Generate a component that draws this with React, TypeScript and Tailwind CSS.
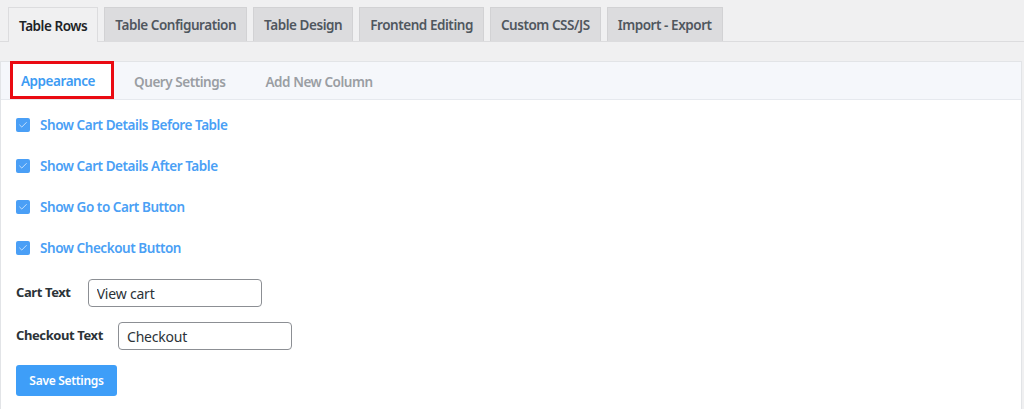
import { Check } from "lucide-react";

const tabs = [
  "Table Rows",
  "Table Configuration",
  "Table Design",
  "Frontend Editing",
  "Custom CSS/JS",
  "Import - Export",
];

const options = [
  "Show Cart Details Before Table",
  "Show Cart Details After Table",
  "Show Go to Cart Button",
  "Show Checkout Button",
];

export default function App() {
  return (
    <div className="h-[409px] overflow-hidden bg-[#f0f0f1] font-['Noto_Sans',sans-serif]">
      {/* top tabs */}
      <div className="flex gap-[6px] border-b border-[#dcdcde] pl-2 pt-[7px]">
        {tabs.map((t, i) =>
          i === 0 ? (
            <div
              key={t}
              className="-mb-px flex h-[35px] items-center border border-b-0 border-[#dcdcde] bg-[#f0f0f1] px-[10px] pt-[2px] text-[13.5px] font-semibold tracking-[-0.45px] text-[#1d2327]"
            >
              {t}
            </div>
          ) : (
            <div
              key={t}
              className="flex h-[34px] items-center border border-b-0 border-[#d2d2d4] bg-[#dcdcde] px-[10px] pt-[2px] text-[13.5px] font-semibold tracking-[-0.45px] text-[#50575e]"
            >
              {t}
            </div>
          )
        )}
      </div>

      {/* panel */}
      <div className="mr-[2px] mt-[19px] border border-[#e2e4e7] bg-white">
        <div className="flex h-[38px] items-stretch border-b border-[#e6e9ee] bg-[#f5f7fb] text-[13.5px] font-semibold tracking-[-0.45px]">
          <div className="-mt-px ml-[9px] flex items-center border-[3px] border-[#ea0a12] bg-white pl-[8px] pr-[16px] pt-[3px] text-[#3d9bf3]">
            Appearance
          </div>
          <div className="flex items-center px-5 pt-[3px] text-[#9a9ea3]">Query Settings</div>
          <div className="flex items-center px-5 pt-[3px] text-[#9a9ea3]">Add New Column</div>
        </div>

        <div className="flex flex-col px-[15px] pt-[15px] pb-[20px]">
          <div className="flex flex-col gap-[21px]">
            {options.map((o) => (
              <label key={o} className="flex h-[20px] items-center gap-[10px]">
                <span className="flex h-[14px] w-[14px] items-center justify-center rounded-[2px] bg-[#4a9ff6]">
                  <Check size={10} strokeWidth={2} className="text-white/80" />
                </span>
                <span className="text-[13.5px] font-semibold tracking-[-0.45px] text-[#4aa0f5]">{o}</span>
              </label>
            ))}
          </div>

          <div className="mt-[21px] flex items-center gap-[17px]">
            <span className="text-[13px] font-bold tracking-[-0.4px] text-[#2c3338]">Cart Text</span>
            <input
              defaultValue="View cart"
              className="h-[28px] w-[174px] rounded-[4px] border border-[#8c8f94] px-2 text-[14px] tracking-[-0.2px] text-[#2c3338] outline-none"
            />
          </div>

          <div className="mt-[15px] flex items-center gap-[15px]">
            <span className="text-[13px] font-bold tracking-[-0.4px] text-[#2c3338]">Checkout Text</span>
            <input
              defaultValue="Checkout"
              className="h-[28px] w-[174px] rounded-[4px] border border-[#8c8f94] px-2 text-[14px] tracking-[-0.2px] text-[#2c3338] outline-none"
            />
          </div>

          <div className="mt-[15px]">
            <button className="h-[31px] w-[101px] rounded-[3px] bg-[#3e9ef8] text-[12px] font-semibold tracking-[-0.3px] text-white">
              Save Settings
            </button>
          </div>
        </div>
      </div>
    </div>
  );
}
